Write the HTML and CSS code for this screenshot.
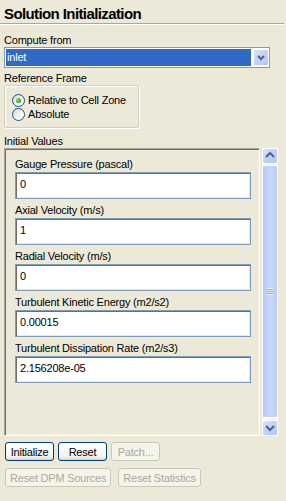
FILE: index.html
```html
<!DOCTYPE html>
<html lang="en">
<head>
    <meta charset="UTF-8">
    <meta name="viewport" content="width=device-width, initial-scale=1.0">
    <title>Solution Initialization</title>
    <link rel="stylesheet" href="styles.css">
</head>
<body>
    <div class="dialog">
        <h1 class="title">Solution Initialization</h1>
        <div class="separator"></div>

        <div class="caption caption-first">Compute from</div>
        <div class="combo">
            <span class="combo-value">inlet</span>
            <span class="arrow-btn">
                <svg width="14" height="15" viewBox="0 0 14 15"><path d="M4 6 L7 9 L10 6" fill="none" stroke="#4d6185" stroke-width="2"/></svg>
            </span>
        </div>

        <div class="caption caption-frame">Reference Frame</div>
        <div class="group">
            <label class="radio-row"><span class="radio checked"></span>Relative to Cell Zone</label>
            <label class="radio-row"><span class="radio"></span>Absolute</label>
        </div>

        <div class="caption caption-values">Initial Values</div>
        <div class="scroll-area">
            <div class="panel">
                <div class="field">
                    <div class="field-label">Gauge Pressure (pascal)</div>
                    <input class="field-input" type="text" value="0">
                </div>
                <div class="field">
                    <div class="field-label">Axial Velocity (m/s)</div>
                    <input class="field-input" type="text" value="1">
                </div>
                <div class="field">
                    <div class="field-label">Radial Velocity (m/s)</div>
                    <input class="field-input" type="text" value="0">
                </div>
                <div class="field">
                    <div class="field-label">Turbulent Kinetic Energy (m2/s2)</div>
                    <input class="field-input" type="text" value="0.00015">
                </div>
                <div class="field">
                    <div class="field-label">Turbulent Dissipation Rate (m2/s3)</div>
                    <input class="field-input" type="text" value="2.156208e-05">
                </div>
            </div>
            <div class="scrollbar">
                <span class="arrow-btn scroll-btn">
                    <svg width="14" height="14" viewBox="0 0 14 14"><path d="M3 8 L7 4 L11 8" fill="none" stroke="#4d6185" stroke-width="2"/></svg>
                </span>
                <span class="thumb"><span class="grip"></span></span>
                <span class="arrow-btn scroll-btn">
                    <svg width="14" height="14" viewBox="0 0 14 14"><path d="M3 5 L7 9 L11 5" fill="none" stroke="#4d6185" stroke-width="2"/></svg>
                </span>
            </div>
        </div>

        <div class="button-row">
            <button class="btn">Initialize</button>
            <button class="btn">Reset</button>
            <button class="btn" disabled>Patch...</button>
        </div>
        <div class="button-row button-row-2">
            <button class="btn" disabled>Reset DPM Sources</button>
            <button class="btn" disabled>Reset Statistics</button>
        </div>
    </div>
</body>
</html>
```
FILE: styles.css
```css
body {
    margin: 0;
    background: #ece9d8;
    font-family: "Liberation Sans", Arial, sans-serif;
    font-size: 11px;
    letter-spacing: -0.2px;
    color: #000;
}
.dialog {
    width: 286px;
    height: 501px;
    overflow: hidden;
}
.title {
    margin: 0;
    padding: 5px 0 0 4px;
    height: 18px;
    font-size: 15px;
    line-height: 17px;
    letter-spacing: -0.6px;
    font-weight: bold;
}
.separator {
    margin-right: 2px;
    border-top: 1px solid #aca899;
    border-bottom: 1px solid #fff;
}
.caption {
    padding-left: 4px;
    height: 13px;
    line-height: 13px;
}
.caption-first {
    margin-top: 9px;
}
.caption-frame {
    margin-top: 4px;
}
.caption-values {
    margin-top: 7px;
}
.combo {
    display: flex;
    height: 21px;
    box-sizing: border-box;
    margin: 0 16px 0 4px;
    padding: 1px 0 1px 1px;
    border: 1px solid #7f9db9;
    background: #fff;
}
.combo-value {
    flex: 1;
    padding-left: 1px;
    background: #316ac5;
    color: #fff;
    line-height: 17px;
}
.arrow-btn {
    display: flex;
    align-items: center;
    justify-content: center;
    width: 16px;
    box-sizing: border-box;
    border: 1px solid #fff;
    border-radius: 2px;
    background: linear-gradient(135deg, #dbe5fd, #c1d3fb 45%, #b2c6f3);
}
.combo .arrow-btn {
    margin-left: 2px;
}
.group {
    width: 135px;
    height: 43px;
    box-sizing: border-box;
    margin-left: 4px;
    padding: 7px 0 0 7px;
    border: 1px solid #d0d0bf;
    border-radius: 2px;
    box-shadow: inset 1px 1px 0 #fff, 1px 1px 0 #fff;
}
.radio-row {
    display: flex;
    align-items: center;
    height: 14px;
    line-height: 14px;
}
.radio {
    position: relative;
    width: 13px;
    height: 13px;
    box-sizing: border-box;
    margin-right: 3px;
    border: 1px solid #1c5180;
    border-radius: 50%;
    background: linear-gradient(135deg, #dcd9c8, #f6f5f0 60%, #fff);
}
.radio.checked::after {
    content: "";
    position: absolute;
    left: 3px;
    top: 3px;
    width: 5px;
    height: 5px;
    border-radius: 50%;
    background: radial-gradient(circle at 35% 35%, #8fe38c, #21a121 70%);
}
.scroll-area {
    display: flex;
    height: 288px;
    margin-left: 4px;
    width: 274px;
}
.panel {
    flex: 1;
    box-sizing: border-box;
    padding: 9px 0 0 10px;
    border-top: 1px solid #aca899;
    border-left: 1px solid #aca899;
    border-right: 1px solid #fff;
    border-bottom: 1px solid #fff;
    box-shadow: inset 1px 1px 0 #716f64, inset -1px -1px 0 #f1efe2;
}
.field {
    margin-bottom: 5px;
}
.field-label {
    height: 13px;
    line-height: 13px;
    margin-bottom: 1px;
    white-space: nowrap;
}
.field-input {
    display: block;
    width: 236px;
    height: 27px;
    box-sizing: border-box;
    margin: 0;
    padding: 0 4px 4px;
    border: 1px solid #7f9db9;
    background: #fff;
    box-shadow: inset 1px 1px 0 #716f64, inset -1px -1px 0 #ece9d8;
    font: inherit;
    letter-spacing: inherit;
    color: #000;
    outline: none;
}
.scrollbar {
    display: flex;
    flex-direction: column;
    width: 16px;
    margin-left: 2px;
    background: #f7f6f1;
}
.scroll-btn {
    height: 16px;
}
.thumb {
    flex: 1;
    display: flex;
    align-items: center;
    justify-content: center;
    margin: 1px 0 2px;
    border: 1px solid #fff;
    border-radius: 2px;
    background: linear-gradient(90deg, #b6c8f3, #c8d7fd 45%, #bdcdf7);
}
.grip {
    width: 6px;
    height: 7px;
    background: repeating-linear-gradient(180deg, #eef3fe 0 1px, #8aa4e0 1px 2px);
}
.button-row {
    display: flex;
    gap: 4px;
    margin: 6px 0 0 5px;
}
.button-row-2 {
    gap: 7px;
    margin-top: 7px;
}
.btn {
    height: 19px;
    min-width: 49px;
    padding: 0 4px;
    border: 1px solid #003c74;
    border-radius: 3px;
    background: linear-gradient(#fff, #f4f3ee 80%, #d8d4c8);
    font: inherit;
    letter-spacing: inherit;
    color: #000;
}
.btn:disabled {
    border-color: #c9c7ba;
    background: #f5f4ea;
    color: #aca899;
}
```
